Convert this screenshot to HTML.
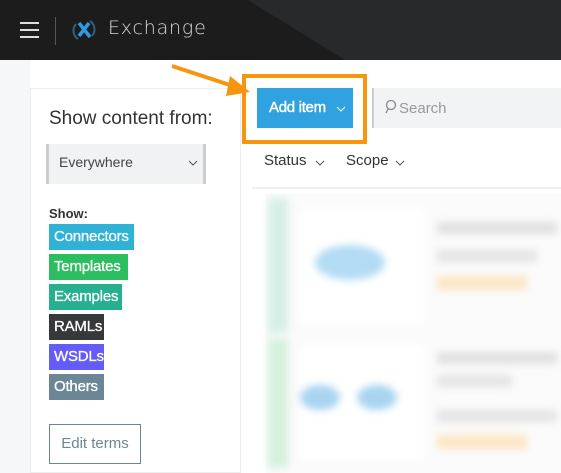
<!DOCTYPE html>
<html><head><style>
*{margin:0;padding:0;box-sizing:border-box}
body{width:561px;height:473px;overflow:hidden;background:#fff;font-family:"Liberation Sans",sans-serif;position:relative}
.a{position:absolute}
.hdr{left:0;top:0;width:561px;height:60px;background:#1c1c1c;overflow:hidden}
.tag{position:absolute;left:49px;height:26px;color:#fff;font-size:15px;line-height:26px;padding-left:5px;letter-spacing:-0.2px;-webkit-text-stroke:0.3px #fff}
.blur{filter:blur(4px)}
</style></head><body>
<div class="a" style="left:0;top:60px;width:30px;height:413px;background:#f6f7f8"></div>
<div class="a hdr">
 <svg class="a" style="left:0;top:0" width="561" height="60"><polygon points="248,0 561,0 561,60 345,60" fill="#28292b"/></svg>
 <div class="a" style="left:20px;top:22px;width:19px;height:2px;background:#ddd"></div>
 <div class="a" style="left:20px;top:29px;width:19px;height:2px;background:#ddd"></div>
 <div class="a" style="left:20px;top:36px;width:19px;height:2px;background:#ddd"></div>
 <div class="a" style="left:55px;top:17px;width:1px;height:28px;background:#555"></div>
 <svg class="a" style="left:71px;top:18px" width="26" height="24" viewBox="0 0 26 24"><path d="M8 5 L19 19 M18 5 L8 18" stroke="#2e9be0" stroke-width="3.5" fill="none"/><path d="M5 6 A10 10 0 0 0 7 21 M21 18 A10 10 0 0 0 19 3" stroke="#2f5f85" stroke-width="2" fill="none"/></svg>
 <div class="a" style="left:108px;top:17px;color:#d8d8d8;font-size:19px;letter-spacing:0.8px;font-family:'DejaVu Sans',sans-serif;font-weight:300">Exchange</div>
</div>
<div class="a" style="left:30px;top:88px;width:211px;height:385px;background:#fff;border:1px solid #eee"></div>
<div class="a" style="left:49px;top:108px;font-size:19px;color:#333">Show content from:</div>
<div class="a" style="left:46px;top:144px;width:160px;height:40px;background:#f1f2f4;border-left:3px solid #ccc;border-right:3px solid #ccc"></div>
<div class="a" style="left:59px;top:154px;font-size:14px;color:#444">Everywhere</div>
<svg class="a" style="left:188px;top:160px" width="10" height="6"><polyline points="1,1 5,5 9,1" stroke="#555" fill="none"/></svg>
<div class="a" style="left:49px;top:206px;font-size:13px;font-weight:bold;color:#333">Show:</div>
<div class="tag" style="top:224px;width:85px;background:#2fb2d6">Connectors</div>
<div class="tag" style="top:254px;width:79px;background:#2bbd5f">Templates</div>
<div class="tag" style="top:284px;width:73px;background:#26b090">Examples</div>
<div class="tag" style="top:314px;width:55px;background:#373839">RAMLs</div>
<div class="tag" style="top:344px;width:55px;background:#635cf8">WSDLs</div>
<div class="tag" style="top:374px;width:55px;background:#6b8796">Others</div>
<div class="a" style="left:49px;top:424px;width:92px;height:40px;border:1px solid #6b8796;color:#6b8796;font-size:15px;line-height:38px;text-align:center">Edit terms</div>
<div class="a" style="left:242px;top:74px;width:125px;height:70px;border:4px solid #f7950f"></div>
<div class="a" style="left:257px;top:88px;width:96px;height:40px;background:#30a2e0;color:#fff;font-size:15px;line-height:40px;padding-left:12px;-webkit-text-stroke:0.4px #fff;letter-spacing:-0.3px">Add item</div>
<svg class="a" style="left:336px;top:106px" width="10" height="6"><polyline points="1,1 5,5 9,1" stroke="#fff" fill="none"/></svg>
<svg class="a" style="left:170px;top:62px" width="85" height="36"><line x1="2" y1="4" x2="66" y2="25" stroke="#f7950f" stroke-width="4"/><polygon points="80,30 60,14 56,34" fill="#f7950f"/></svg>
<div class="a" style="left:372px;top:88px;width:189px;height:40px;background:#f2f3f4;border-left:2px solid #ccc"></div>
<svg class="a" style="left:384px;top:99px" width="14" height="16"><circle cx="7" cy="6" r="4.5" stroke="#888" fill="none" stroke-width="1.3"/><line x1="4" y1="10" x2="2" y2="14" stroke="#888" stroke-width="1.3"/></svg>
<div class="a" style="left:399px;top:100px;font-size:15px;color:#999">Search</div>
<div class="a" style="left:264px;top:152px;font-size:15px;color:#333">Status</div>
<svg class="a" style="left:315px;top:160px" width="10" height="6"><polyline points="1,1 5,5 9,1" stroke="#555" fill="none"/></svg>
<div class="a" style="left:346px;top:152px;font-size:15px;color:#333">Scope</div>
<svg class="a" style="left:395px;top:160px" width="10" height="6"><polyline points="1,1 5,5 9,1" stroke="#555" fill="none"/></svg>
<div class="a" style="left:252px;top:187px;width:309px;height:2px;background:#eef0f1"></div>
<div class="a" style="left:266px;top:194px;width:295px;height:279px;background:#fbfbfb"></div>
<div class="a blur" style="left:268px;top:198px;width:20px;height:135px;background:#d6efe6"></div>
<div class="a blur" style="left:268px;top:338px;width:20px;height:130px;background:#d6f0de"></div>
<div class="a blur" style="left:300px;top:208px;width:125px;height:115px;background:#fff"></div>
<div class="a blur" style="left:300px;top:345px;width:125px;height:115px;background:#fff"></div>
<div class="a blur" style="left:315px;top:245px;width:70px;height:35px;border-radius:50%;background:#b3dbf4"></div>
<div class="a blur" style="left:300px;top:385px;width:40px;height:25px;border-radius:50%;background:#a8d4f1"></div>
<div class="a blur" style="left:357px;top:385px;width:40px;height:25px;border-radius:50%;background:#a8d4f1"></div>
<div class="a blur" style="left:437px;top:222px;width:120px;height:12px;background:#e0e0e0"></div>
<div class="a blur" style="left:437px;top:250px;width:100px;height:12px;background:#e4e4e4"></div>
<div class="a blur" style="left:437px;top:276px;width:90px;height:14px;background:#fbe6c4"></div>
<div class="a blur" style="left:437px;top:352px;width:120px;height:12px;background:#e0e0e0"></div>
<div class="a blur" style="left:437px;top:375px;width:75px;height:12px;background:#e4e4e4"></div>
<div class="a blur" style="left:437px;top:410px;width:120px;height:12px;background:#e4e4e4"></div>
<div class="a blur" style="left:437px;top:435px;width:90px;height:14px;background:#fbe6c4"></div>
</body></html>
